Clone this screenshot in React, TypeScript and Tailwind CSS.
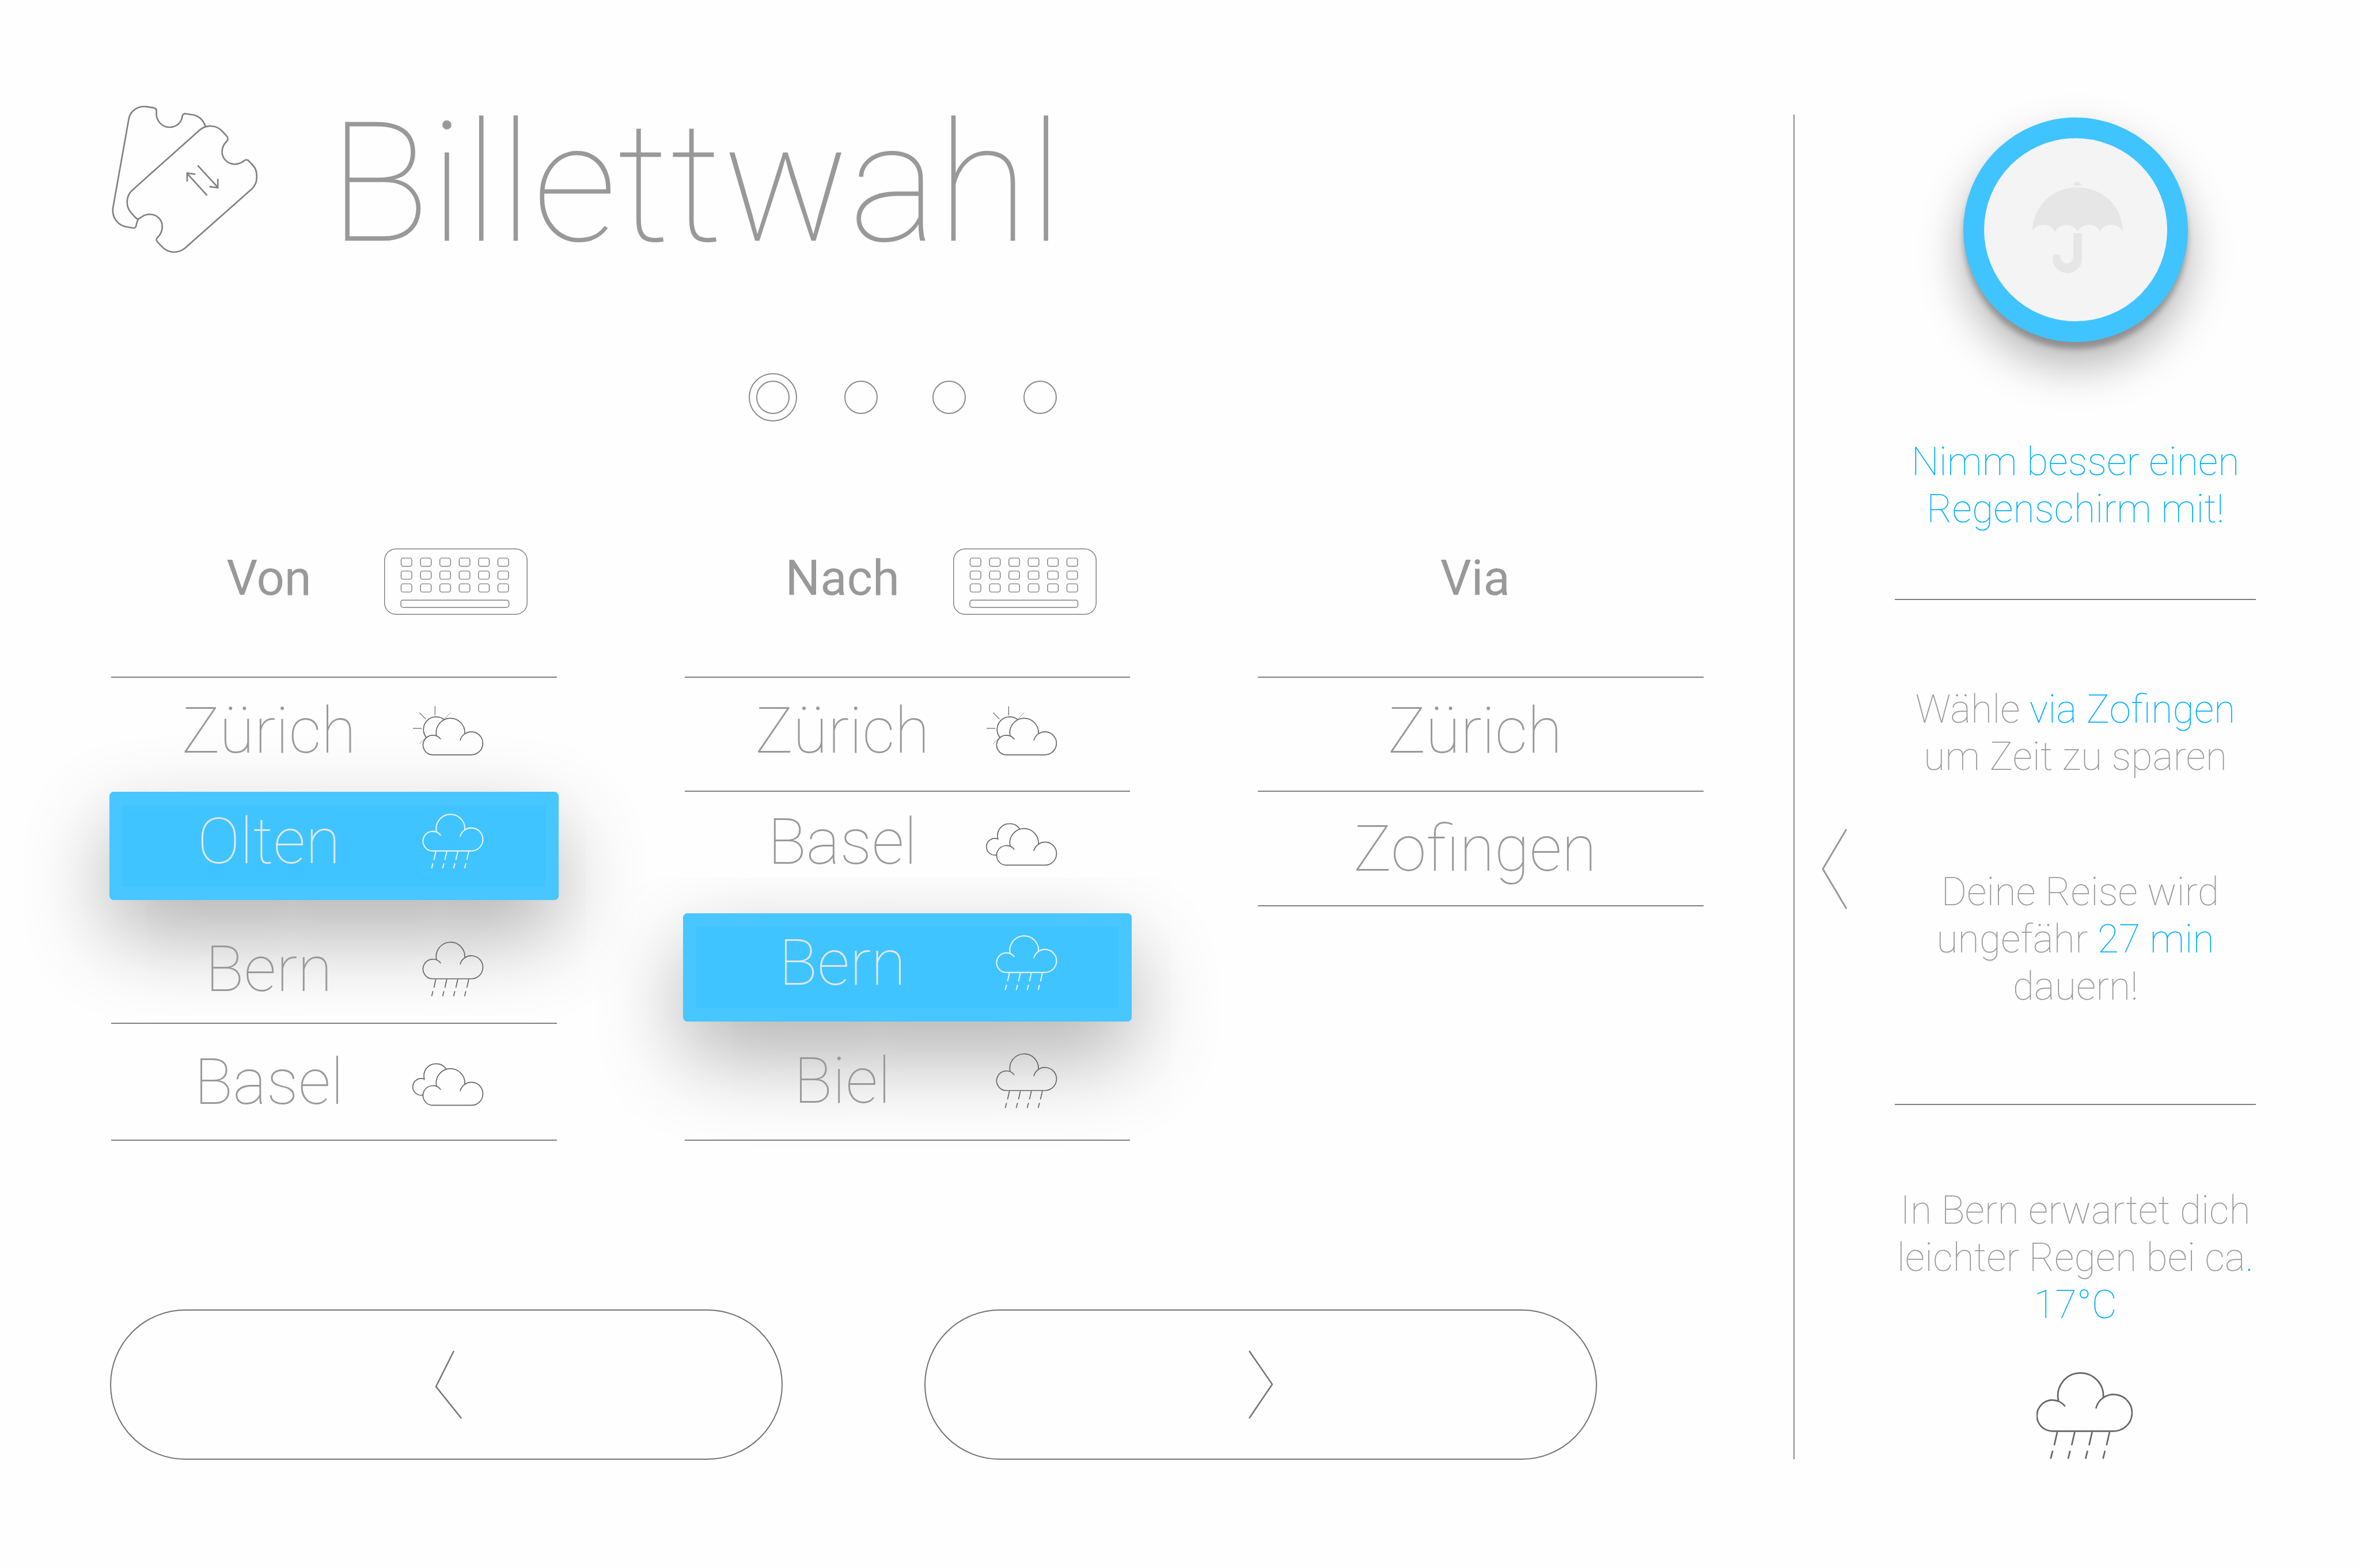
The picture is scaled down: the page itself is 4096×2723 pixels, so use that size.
import React from "react";

type Weather = "sun" | "clouds" | "rain";

type Stop = {
  name: string;
  weather?: Weather;
  selected?: boolean;
  className: string;
};

type Column = {
  title: string;
  keyboard?: string;
  stops: Stop[];
};

const LINE = "border-b-2 border-[#808080]";
const NO_LINE = "border-b-2 border-transparent";

const columns: Column[] = [
  {
    title: "Von",
    keyboard: "ml-[26px]",
    stops: [
      { name: "Zürich", weather: "sun", className: `pt-[26px] pb-[38px] ${NO_LINE}` },
      { name: "Olten", weather: "rain", selected: true, className: "" },
      { name: "Bern", weather: "rain", className: `pt-[54px] pb-[27px] ${LINE}` },
      { name: "Basel", weather: "clouds", className: `pt-[35px] pb-[34px] ${LINE}` },
    ],
  },
  {
    title: "Nach",
    keyboard: "ml-[18px]",
    stops: [
      { name: "Zürich", weather: "sun", className: `pt-[26px] pb-[38px] ${LINE}` },
      { name: "Basel", weather: "clouds", className: "pt-[21px] pb-[58px]" },
      { name: "Bern", weather: "rain", selected: true, className: "" },
      { name: "Biel", weather: "rain", className: `pt-[37px] pb-[36px] ${LINE}` },
    ],
  },
  {
    title: "Via",
    stops: [
      { name: "Zürich", className: `pt-[26px] pb-[38px] ${LINE}` },
      { name: "Zofingen", className: `pt-[33px] pb-[32px] ${LINE}` },
    ],
  },
];

function Cloud() {
  return (
    <>
      <path d="M282 246A70.5 70.5 0 1 0 227 358H503A83 83 0 1 0 422 255" />
      <path d="M252 220A103 103 0 1 1 455 208" />
    </>
  );
}

function Rain() {
  return (
    <>
      {[0, 79, 158, 237].map((dx) => (
        <path key={dx} d={`M${247 + dx} 361l-14 61M${226 + dx} 447l-9 36`} />
      ))}
    </>
  );
}

function WeatherIcon({ kind, selected }: { kind: Weather; selected?: boolean }) {
  const stroke = selected ? "#f5f5f5" : "#666666";
  const strokeWidth = selected ? 8 : 7;
  if (kind === "rain") {
    return (
      <svg className="h-[96px] w-[124px]" viewBox="78 90 514 397" fill="none" stroke={stroke} strokeWidth={strokeWidth} aria-hidden="true">
        <Cloud />
        <Rain />
      </svg>
    );
  }
  if (kind === "sun") {
    return (
      <svg className="h-[86px] w-[124px]" viewBox="78 85 514 357" fill="none" stroke={stroke} strokeWidth={strokeWidth} aria-hidden="true">
        <g transform="translate(0 79)">
          <Cloud />
        </g>
        <path d="M178 312A91.5 91.5 0 0 1 305 182" />
        <path d="M241 87V152M129 133L175 180M82 246H145" strokeWidth={5} />
        <path d="M353 133L309 178M129 357L175 314" strokeWidth={3} />
      </svg>
    );
  }
  return (
    <svg className="mt-2 h-[75px] w-[124px]" viewBox="78 67 514 310" fill="none" stroke={stroke} strokeWidth={strokeWidth} aria-hidden="true">
      <g transform="translate(0 13)">
        <Cloud />
      </g>
      <path d="M322 112A86 86 0 0 0 247 72A86 86 0 0 0 161 158Q161 171 164 183A60 60 0 1 0 158 296" />
    </svg>
  );
}

function TicketIcon() {
  return (
    <svg className="mt-[9px] h-[257px] w-[254px] shrink-0" viewBox="136 94 1045 1062" fill="none" stroke="#808080" strokeWidth="11" aria-hidden="true">
      <path d="M810 247C798 200 760 165 715 161L668 154C655 152 645 160 644 173C638 220 600 251 552 251C495 251 452 200 459 140C461 123 453 115 440 112L393 104C325 93 267 135 259 198L147 828C137 895 180 957 245 966L290 974C303 976 312 967 314 955C316 938 320 922 332 908" />
      <path d="M768 272C818 229 890 234 932 281L965 317C973 326 973 342 964 351C926 385 919 440 946 478C977 520 1040 530 1087 492C1098 482 1112 483 1121 492L1155 529C1170 546 1178 568 1178 600C1180 640 1168 672 1140 696L664 1118C614 1160 545 1155 500 1110L466 1074C456 1062 457 1049 468 1040C505 1005 512 945 479 905C445 867 383 867 345 900C332 911 320 911 310 901L275 862C237 818 238 742 288 700Z" />
      <path d="M822 740L679 583M679 641V580L738 588M755 525L899 682M899 622V685L839 677" />
    </svg>
  );
}

function KeyboardIcon() {
  return (
    <svg className="h-[116px] w-[249px]" viewBox="54 93 1030 478" fill="none" stroke="#808080" strokeWidth="6" aria-hidden="true">
      <rect x="57" y="97" width="1024" height="470" rx="82" />
      {[163, 256, 348].map((y) =>
        [0, 1, 2, 3, 4, 5].map((i) => (
          <rect key={`${y}-${i}`} x={176 + 139 * i} y={y} width="77" height="59" rx="15" />
        )),
      )}
      <rect x="174" y="465" width="776" height="52" rx="16" />
    </svg>
  );
}

function UmbrellaIcon() {
  return (
    <svg className="h-[169px] w-[169px]" viewBox="507.5 432.5 520 520" fill="#e6e6e6" aria-hidden="true">
      <path d="M757 455C762 427 794 427 799 455Z" />
      <path d="M538 700C538 570 640 465 779 465S1021 570 1021 700H1018C1000 653 918 653 902 700H898C880 653 800 653 782 700H778C760 655 680 655 661 700H656C638 653 556 653 538 700Z" />
      <path d="M757 709H803V846A78 77 0 0 1 647 846Q647 835 650 824H685C685 850 700 871 722 871C743 871 757 852 757 832Z" />
    </svg>
  );
}

function StopRow({ stop }: { stop: Stop }) {
  const state = stop.selected
    ? "-mx-[3px] rounded-lg bg-[#40c4ff] px-[3px] pt-[20px] pb-[36px] text-[#e6e6e6] shadow-[inset_0_0_0_23px_#48c6ff,0_60px_150px_rgba(0,0,0,0.31)]"
    : `relative z-10 text-[#999999] ${stop.className}`;
  return (
    <li className={state}>
      <button type="button" aria-pressed={!!stop.selected} className="flex w-full items-center text-[111px] leading-[132px] font-thin">
        {stop.weather ? (
          <>
            <span className="ml-[100px] w-[348px] text-center">{stop.name}</span>
            <span className="ml-[75px]">
              <WeatherIcon kind={stop.weather} selected={stop.selected} />
            </span>
          </>
        ) : (
          <span className="w-full pr-[20px] text-center">{stop.name}</span>
        )}
      </button>
    </li>
  );
}

function StopColumn({ column }: { column: Column }) {
  return (
    <section>
      <div className="flex h-[116px] items-center">
        {column.keyboard ? (
          <>
            <h2 className="ml-[100px] w-[348px] pb-3 text-center text-[85px] leading-[102px] text-[#999999]">{column.title}</h2>
            <button type="button" aria-label={`${column.title}: Tastatur`} className={column.keyboard}>
              <KeyboardIcon />
            </button>
          </>
        ) : (
          <h2 className="w-full pr-[20px] pb-3 text-center text-[85px] leading-[102px] text-[#999999]">{column.title}</h2>
        )}
      </div>
      <ul className="mt-[107px] border-t-2 border-[#808080]">
        {column.stops.map((stop) => (
          <StopRow key={stop.name} stop={stop} />
        ))}
      </ul>
    </section>
  );
}

function Steps() {
  return (
    <nav aria-label="Schritte" className="mt-[184px] flex h-[84px] items-center justify-center pr-[16px]">
      <button type="button" aria-label="Schritt 1" aria-current="step" className="flex size-[84px] items-center justify-center rounded-full border-2 border-[#8c8c8c]">
        <span className="size-[58px] rounded-full border-2 border-[#8c8c8c]" />
      </button>
      <button type="button" aria-label="Schritt 2" className="ml-[82px] size-[58px] rounded-full border-2 border-[#8c8c8c]" />
      <button type="button" aria-label="Schritt 3" className="ml-[95px] size-[58px] rounded-full border-2 border-[#8c8c8c]" />
      <button type="button" aria-label="Schritt 4" className="ml-[100px] size-[58px] rounded-full border-2 border-[#8c8c8c]" />
    </nav>
  );
}

const pill = "flex h-[261px] flex-1 items-center justify-center rounded-full border-2 border-[#737373]";

export default function App() {
  return (
    <div className="flex min-h-screen bg-[#fefefe] font-['Roboto',sans-serif]">
      <main className="flex-1 pt-[174px] pr-[156px] pb-[188px] pl-[193px]">
        <header className="flex items-start">
          <TicketIcon />
          <h1 className="ml-[124px] text-[290px] leading-[290px] font-thin text-[#999999]">Billettwahl</h1>
        </header>

        <Steps />

        <div className="mt-[220px] grid grid-cols-3 gap-[222px]">
          {columns.map((column) => (
            <StopColumn key={column.title} column={column} />
          ))}
        </div>

        <div className="-ml-[2px] mt-[293px] mr-[185px] flex gap-[246px]">
          <button type="button" aria-label="Zurück" className={pill}>
            <svg className="ml-2 h-[119px] w-[48px]" viewBox="0 0 48 119" fill="none" stroke="#737373" strokeWidth="2.5" aria-hidden="true">
              <path d="M33 1L2 63L46 118" />
            </svg>
          </button>
          <button type="button" aria-label="Weiter" className={pill}>
            <svg className="h-[119px] w-[44px]" viewBox="0 0 44 119" fill="none" stroke="#737373" strokeWidth="2.5" aria-hidden="true">
              <path d="M2 1L42 59L2 118" />
            </svg>
          </button>
        </div>
      </main>

      <aside className="mt-[199px] mr-[179px] mb-[190px] flex items-start border-l-2 border-[#8c8c8c]">
        <button type="button" aria-label="Seitenleiste öffnen" className="mt-[1240px] ml-[47px]">
          <svg className="h-[140px] w-[45px]" viewBox="0 0 45 140" fill="none" stroke="#999999" strokeWidth="3" aria-hidden="true">
            <path d="M43 1L2 70L43 139" />
          </svg>
        </button>
        <div className="ml-[82px] flex w-[627px] flex-col pt-[5px] text-center text-[68px] leading-[82px] font-thin text-[#999999]">
          <div className="mx-auto flex size-[390px] items-center justify-center rounded-full border-[36px] border-[#40c4ff] bg-[#f4f4f4] shadow-[0_12px_10px_rgba(0,0,0,0.25),0_40px_80px_rgba(0,0,0,0.3)]">
            <UmbrellaIcon />
          </div>
          <p className="mt-[167px] text-[#00b0ff]">
            Nimm besser einen
            <br />
            Regenschirm mit!
          </p>
          <hr className="mt-[115px] border-t-2 border-[#808080]" />
          <p className="mt-[149px]">
            Wähle <span className="text-[#00b0ff]">via Zofingen</span>
            <br />
            um Zeit zu sparen
          </p>
          <p className="mt-[153px]">
            {"\u00a0"}Deine Reise wird
            <br />
            ungefähr <span className="text-[#00b0ff]">27 min</span>
            <br />
            dauern!
          </p>
          <hr className="mt-[163px] border-t-2 border-[#808080]" />
          <p className="mt-[142px]">
            In Bern erwartet dich
            <br />
            leichter Regen bei ca<span className="text-[#00b0ff]">.</span>
            <br />
            <span className="text-[#00b0ff]">17°C</span>
          </p>
          <svg className="mt-[76px] ml-[246px] h-[151px] w-[167px]" viewBox="153 91 435 394" fill="none" stroke="#666666" strokeWidth="7" aria-hidden="true">
            <Cloud />
            <Rain />
          </svg>
        </div>
      </aside>
    </div>
  );
}
